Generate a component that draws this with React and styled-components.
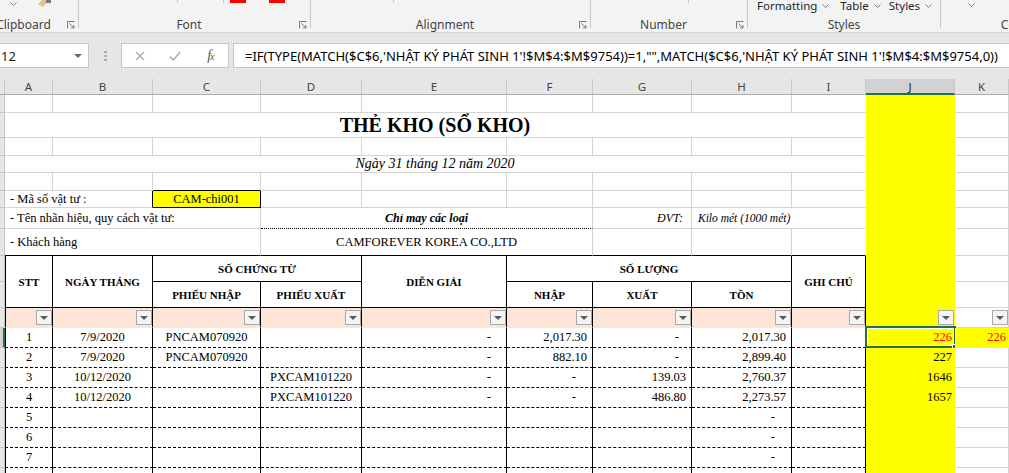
import React from 'react';
import styled, { createGlobalStyle } from 'styled-components';

const UI = `"Segoe UI", "Noto Sans", "Open Sans", sans-serif`;
const SERIF = `"Liberation Serif", "Times New Roman", serif`;
const YELLOW = '#ffff00';
const PEACH = '#fce4d6';
const GREEN = '#217346';

const GlobalStyle = createGlobalStyle`
  html, body { margin: 0; padding: 0; background: #fff; overflow: hidden; }
  body { font-family: ${SERIF}; }
  * { box-sizing: border-box; }
`;

const Window = styled.div`
  width: 1009px;
  height: 473px;
  overflow: hidden;
  display: flex;
  flex-direction: column;
  background: #e6e6e6;
`;

/* ---------- ribbon ---------- */

const Ribbon = styled.div`
  flex: none;
  height: 33px;
  display: flex;
  background: #f3f3f3;
  border-bottom: 1px solid #d4d4d4;
  overflow: hidden;
`;

const Group = styled.div`
  flex: none;
  width: ${p => p.$w}px;
  margin-left: ${p => p.$ml || 0}px;
  display: flex;
`;

const GroupBody = styled.div`
  flex: 1;
  display: grid;
  grid-template-rows: 17px 15px;
`;

const GroupSep = styled.div`
  flex: none;
  width: 1px;
  height: 28px;
  background: #c8c8c8;
`;

const Top = styled.div`
  display: flex;
  align-items: flex-start;
`;

const LabelRow = styled.div`
  display: flex;
  align-items: center;
`;

const Label = styled.span`
  flex: 1;
  text-align: center;
  font: 12px ${UI};
  color: #444;
  white-space: nowrap;
`;

const Launcher = styled.svg`
  flex: none;
  width: 8px;
  height: 8px;
  margin-right: 3px;
`;

const TinySep = styled.span`
  flex: none;
  width: 1px;
  height: 3px;
  background: #c8c8c8;
  margin-left: ${p => p.$ml}px;
`;

const ColorBar = styled.span`
  flex: none;
  width: 16px;
  height: 3px;
  background: #ff0000;
  margin-left: ${p => p.$ml}px;
`;

const DropItem = styled.span`
  flex: none;
  display: inline-flex;
  align-items: center;
  gap: 5px;
  margin-left: ${p => p.$ml}px;
  font: 11.5px ${UI};
  line-height: 12px;
  color: #262626;
  white-space: nowrap;
`;

const Chevron = ({ ml = 0, top = 0 }) => (
  <svg width="7" height="4" viewBox="0 0 7 4" style={{ marginLeft: ml, marginTop: top, flex: 'none' }}>
    <polyline points="0.5,0.5 3.5,3.5 6.5,0.5" fill="none" stroke="#7a7a7a" />
  </svg>
);

const LaunchIcon = () => (
  <Launcher viewBox="0 0 8 8">
    <path d="M0.5 7.5V0.5H7.5" fill="none" stroke="#7a7a7a" />
    <path d="M2.5 2.5L7 7M7 4v3H4" fill="none" stroke="#7a7a7a" />
  </Launcher>
);

/* ---------- formula bar ---------- */

const FormulaBar = styled.div`
  flex: none;
  height: 46px;
  padding-top: 10px;
  display: flex;
  align-items: flex-start;
`;

const NameBox = styled.div`
  flex: none;
  width: 90px;
  height: 25px;
  margin-left: -1px;
  background: #fff;
  border: 1px solid #c6c6c6;
  display: flex;
  align-items: center;
  justify-content: space-between;
  padding: 0 6px 0 1px;
  font: 13px ${UI};
  color: #222;
`;

const Caret = styled.span`
  width: 0;
  height: 0;
  border-left: 4px solid transparent;
  border-right: 4px solid transparent;
  border-top: 4px solid #6b6b6b;
`;

const Dots = styled.div`
  flex: none;
  width: 3px;
  height: 12px;
  margin: 7px 0 0 15px;
  background: radial-gradient(circle, #9a9a9a 1px, transparent 1.3px) 0 0 / 3px 4px repeat-y;
`;

const FxBox = styled.div`
  flex: none;
  width: 108px;
  height: 25px;
  margin-left: 14px;
  background: #fff;
  border: 1px solid #c6c6c6;
  display: grid;
  grid-template-columns: repeat(3, 1fr);
  align-items: center;
  justify-items: center;
`;

const Fx = styled.span`
  font: italic 14px ${SERIF};
  color: #555;
  letter-spacing: -1px;
  & small { font-size: 10px; }
`;

const FormulaInput = styled.div`
  flex: 1;
  height: 25px;
  margin: 0 -10px 0 4px;
  background: #fff;
  border: 1px solid #c6c6c6;
  display: flex;
  align-items: center;
  padding-left: 11px;
  font: 13px ${UI};
  color: #000;
  white-space: nowrap;
  overflow: hidden;
`;

/* ---------- sheet ---------- */

const Sheet = styled.div`
  flex: 1;
  display: grid;
  grid-template-columns: 5px 48px 100px 108px 101px 145px 86px 99px 100px 74px 89px 54px;
  grid-template-rows: 16px 18px 25px 18px 17px 18px 17px 21px 27px 26px 26px 20px repeat(8, 20px);
  background: #fff;
  overflow: hidden;
`;

const Corner = styled.div`
  background: #e6e6e6;
  border-right: 1px solid #c6c6c6;
  border-bottom: 1px solid #ababab;
`;

const ColHead = styled.div`
  display: flex;
  align-items: center;
  justify-content: center;
  background: ${p => (p.$active ? '#d2d2d2' : '#e6e6e6')};
  border-right: 1px solid #c6c6c6;
  border-bottom: ${p => (p.$active ? `2px solid ${GREEN}` : '1px solid #ababab')};
  font: 11.5px ${UI};
  color: ${p => (p.$active ? '#1d1d1d' : '#444')};
  padding-top: ${p => (p.$active ? 1 : 0)}px;
`;

const RowHead = styled.div`
  background: ${p => (p.$active ? '#d2d2d2' : '#e6e6e6')};
  border-right: ${p => (p.$active ? `2px solid ${GREEN}` : '1px solid #c6c6c6')};
  border-bottom: 1px solid #c6c6c6;
`;

const borders = {
  grid: '1px solid #d4d4d4',
  black: '1px solid #000',
  dash: '1px dashed #000',
  dot: '1px dotted #000',
  clear: '1px solid transparent',
};

const justify = { left: 'flex-start', center: 'center', right: 'flex-end' };

const Cell = styled.div`
  grid-column: span ${p => p.$span || 1};
  grid-row: span ${p => p.$rows || 1};
  position: relative;
  display: flex;
  align-items: center;
  justify-content: ${p => justify[p.$align || 'left']};
  padding: 0 ${p => p.$pr ?? 2}px 0 ${p => p.$pl ?? 2}px;
  background: ${p => p.$bg || '#fff'};
  border-right: ${p => borders[p.$r || 'grid']};
  border-bottom: ${p => borders[p.$b || 'grid']};
  border-left: ${p => (p.$l ? borders[p.$l] : 'none')};
  font-family: ${SERIF};
  font-size: ${p => p.$size || 12.5}px;
  font-weight: ${p => (p.$bold ? 700 : 400)};
  font-style: ${p => (p.$italic ? 'italic' : 'normal')};
  color: ${p => p.$color || '#000'};
  white-space: nowrap;
  text-align: center;
`;

const FilterBtn = styled.span`
  flex: none;
  width: 16px;
  height: 15px;
  border: 1px solid #a9a9a9;
  background: #f4f4f4;
  display: flex;
  align-items: center;
  justify-content: center;
  &::after {
    content: '';
    border-left: 4px solid transparent;
    border-right: 4px solid transparent;
    border-top: 4px solid #5a5a5a;
  }
`;

const Selection = styled.div`
  position: absolute;
  top: -2px;
  left: -1px;
  right: -2px;
  bottom: -1px;
  border: 2px solid ${GREEN};
  box-shadow: inset 0 0 0 1px #fff;
  pointer-events: none;
`;

const FillHandle = styled.div`
  position: absolute;
  right: -4px;
  bottom: -4px;
  width: 6px;
  height: 6px;
  background: ${GREEN};
  border: 1px solid #fff;
`;

const COLS = ['A', 'B', 'C', 'D', 'E', 'F', 'G', 'H', 'I', 'J', 'K'];

const FORMULA =
  "=IF(TYPE(MATCH($C$6,'NHẬT KÝ PHÁT SINH 1'!$M$4:$M$9754))=1,\"\",MATCH($C$6,'NHẬT KÝ PHÁT SINH 1'!$M$4:$M$9754,0))";

const entries = [
  { stt: '1', date: '7/9/2020', pn: 'PNCAM070920', dg: '-', nhap: '2,017.30', xuat: '-', ton: '2,017.30', j: '226', k: '226', sel: true },
  { stt: '2', date: '7/9/2020', pn: 'PNCAM070920', dg: '-', nhap: '882.10', xuat: '-', ton: '2,899.40', j: '227' },
  { stt: '3', date: '10/12/2020', px: 'PXCAM101220', dg: '-', nhap: '-', xuat: '139.03', ton: '2,760.37', j: '1646' },
  { stt: '4', date: '10/12/2020', px: 'PXCAM101220', dg: '-', nhap: '-', xuat: '486.80', ton: '2,273.57', j: '1657' },
  { stt: '5', ton: '-' },
  { stt: '6', ton: '-' },
  { stt: '7', ton: '-' },
  {},
];

// accounting format: dashes sit further from the right edge than numbers
const padFor = (v, dashPad) => (v === '-' ? dashPad : 5);

const YellowCell = props => <Cell $bg={YELLOW} $r="clear" $b="clear" $align="right" {...props} />;

const PlainRow = ({ cBottom }) => (
  <>
    <RowHead />
    {COLS.slice(0, 9).map((c, i) => (
      <Cell key={c} $b={i === 2 && cBottom ? 'black' : 'grid'} $r={i === 8 ? 'clear' : 'grid'} />
    ))}
    <YellowCell />
    <Cell />
  </>
);

const SpanRow = ({ children }) => (
  <>
    <RowHead />
    {children}
    <YellowCell />
    <Cell />
  </>
);

const T = { $l: 'black', $r: 'black', $b: 'black', $bold: true, $size: 11, $align: 'center' };

const DataRow = ({ e }) => (
  <>
    <RowHead $active={e.sel} />
    <Cell $l="black" $r="black" $b="dash" $align="center">{e.stt}</Cell>
    <Cell $r="black" $b="dash" $align="center">{e.date}</Cell>
    <Cell $r="black" $b="dash" $align="center">{e.pn}</Cell>
    <Cell $r="black" $b="dash" $align="center">{e.px}</Cell>
    <Cell $r="black" $b="dash" $align="right" $pr={15}>{e.dg}</Cell>
    <Cell $r="black" $b="dash" $align="right" $pr={padFor(e.nhap, 16)}>{e.nhap}</Cell>
    <Cell $r="black" $b="dash" $align="right" $pr={padFor(e.xuat, 12)}>{e.xuat}</Cell>
    <Cell $r="black" $b="dash" $align="right" $pr={padFor(e.ton, 16)}>{e.ton}</Cell>
    <Cell $r="black" $b="dash" />
    <YellowCell $pr={2} $color={e.sel ? '#ff0000' : '#000'}>
      {e.j}
      {e.sel && (
        <Selection>
          <FillHandle />
        </Selection>
      )}
    </YellowCell>
    {e.k ? (
      <Cell $bg={YELLOW} $r="clear" $b="clear" $align="right" $pr={2} $color="#ff0000">{e.k}</Cell>
    ) : (
      <Cell />
    )}
  </>
);

export default function App() {
  return (
    <>
      <GlobalStyle />
      <Window>
        <Ribbon>
          <Group $w={99} $ml={-20}>
            <GroupBody>
              <Top>
                <Chevron ml={30} top={2} />
                <svg width="14" height="8" viewBox="0 0 14 8" style={{ marginLeft: 20, flex: 'none' }}>
                  <polygon points="5,0 12,0 6,7 1,4" fill="#e8c08a" />
                  <rect x="9" y="0" width="5" height="3" fill="#7a7a7a" />
                </svg>
              </Top>
              <LabelRow>
                <Label>Clipboard</Label>
                <LaunchIcon />
              </LabelRow>
            </GroupBody>
            <GroupSep />
          </Group>

          <Group $w={232}>
            <GroupBody>
              <Top>
                <TinySep $ml={98} />
                <TinySep $ml={45} />
                <ColorBar $ml={6} />
                <ColorBar $ml={23} />
              </Top>
              <LabelRow>
                <Label>Font</Label>
                <LaunchIcon />
              </LabelRow>
            </GroupBody>
            <GroupSep />
          </Group>

          <Group $w={280}>
            <GroupBody>
              <Top>
                <TinySep $ml={82} />
              </Top>
              <LabelRow>
                <Label>Alignment</Label>
                <LaunchIcon />
              </LabelRow>
            </GroupBody>
            <GroupSep />
          </Group>

          <Group $w={157}>
            <GroupBody>
              <Top>
                <TinySep $ml={97} />
              </Top>
              <LabelRow>
                <Label>Number</Label>
                <LaunchIcon />
              </LabelRow>
            </GroupBody>
            <GroupSep />
          </Group>

          <Group $w={193}>
            <GroupBody>
              <Top>
                <DropItem $ml={9}>Formatting <Chevron /></DropItem>
                <DropItem $ml={11}>Table <Chevron /></DropItem>
                <DropItem $ml={8}>Styles <Chevron /></DropItem>
              </Top>
              <LabelRow>
                <Label>Styles</Label>
              </LabelRow>
            </GroupBody>
            <GroupSep />
          </Group>

          <Group $w={146}>
            <GroupBody>
              <Top>
                <Chevron ml={27} top={3} />
              </Top>
              <LabelRow>
                <Label>Cells</Label>
              </LabelRow>
            </GroupBody>
          </Group>
        </Ribbon>

        <FormulaBar>
          <NameBox>
            <span>12</span>
            <Caret />
          </NameBox>
          <Dots />
          <FxBox>
            <svg width="10" height="10" viewBox="0 0 10 10">
              <path d="M1 1L9 9M9 1L1 9" stroke="#a6a6a6" strokeWidth="1.2" />
            </svg>
            <svg width="12" height="10" viewBox="0 0 12 10">
              <path d="M1 5.5L4.5 9L11 1" fill="none" stroke="#a6a6a6" strokeWidth="1.3" />
            </svg>
            <Fx>
              f<small>x</small>
            </Fx>
          </FxBox>
          <FormulaInput>{FORMULA}</FormulaInput>
        </FormulaBar>

        <Sheet>
          <Corner />
          {COLS.map(c => (
            <ColHead key={c} $active={c === 'J'}>{c}</ColHead>
          ))}

          <PlainRow />
          <SpanRow>
            <Cell $span={9} $r="clear" $align="center" $bold $size={20}>THẺ KHO (SỔ KHO)</Cell>
          </SpanRow>
          <PlainRow />
          <SpanRow>
            <Cell $span={9} $r="clear" $align="center" $italic $size={14}>Ngày 31 tháng 12 năm 2020</Cell>
          </SpanRow>
          <PlainRow cBottom />
          <SpanRow>
            <Cell $span={2} $r="black" $pl={5}>- Mã số vật tư :</Cell>
            <Cell $bg={YELLOW} $r="black" $b="black" $align="center">CAM-chi001</Cell>
            <Cell />
            <Cell />
            <Cell />
            <Cell />
            <Cell />
            <Cell $r="clear" />
          </SpanRow>
          <SpanRow>
            <Cell $span={3} $pl={5}>- Tên nhãn hiệu, quy cách vật tư:</Cell>
            <Cell $span={3} $b="dot" $align="center" $bold $italic $size={12}>Chỉ may các loại</Cell>
            <Cell $align="right" $italic $size={12} $pr={8}>ĐVT:</Cell>
            <Cell $span={2} $r="clear" $italic $size={11.5} $pl={6}>Kilo mét (1000 mét)</Cell>
          </SpanRow>
          <SpanRow>
            <Cell $span={3} $b="black" $pl={5}>- Khách hàng</Cell>
            <Cell $span={3} $b="black" $align="center">CAMFOREVER KOREA CO.,LTD</Cell>
            <Cell $b="black" />
            <Cell $b="black" />
            <Cell $b="black" $r="clear" />
          </SpanRow>

          <RowHead />
          <Cell {...T} $rows={2}>STT</Cell>
          <Cell {...T} $l={null} $rows={2}>NGÀY THÁNG</Cell>
          <Cell {...T} $l={null} $span={2}>SỐ CHỨNG TỪ</Cell>
          <Cell {...T} $l={null} $rows={2}>DIỄN GIẢI</Cell>
          <Cell {...T} $l={null} $span={3}>SỐ LƯỢNG</Cell>
          <Cell {...T} $l={null} $rows={2}>GHI CHÚ</Cell>
          <YellowCell />
          <Cell />

          <RowHead />
          <Cell {...T} $l={null}>PHIẾU NHẬP</Cell>
          <Cell {...T} $l={null}>PHIẾU XUẤT</Cell>
          <Cell {...T} $l={null}>NHẬP</Cell>
          <Cell {...T} $l={null}>XUẤT</Cell>
          <Cell {...T} $l={null}>TỒN</Cell>
          <YellowCell />
          <Cell />

          <RowHead />
          {COLS.slice(0, 9).map((c, i) => (
            <Cell key={c} $bg={PEACH} $l={i === 0 ? 'black' : null} $r="black" $b="clear" $align="right" $pr={0}>
              <FilterBtn />
            </Cell>
          ))}
          <YellowCell $pr={0}>
            <FilterBtn />
          </YellowCell>
          <Cell $align="right" $pr={0}>
            <FilterBtn />
          </Cell>

          {entries.map((e, i) => (
            <DataRow key={i} e={e} />
          ))}
        </Sheet>
      </Window>
    </>
  );
}
